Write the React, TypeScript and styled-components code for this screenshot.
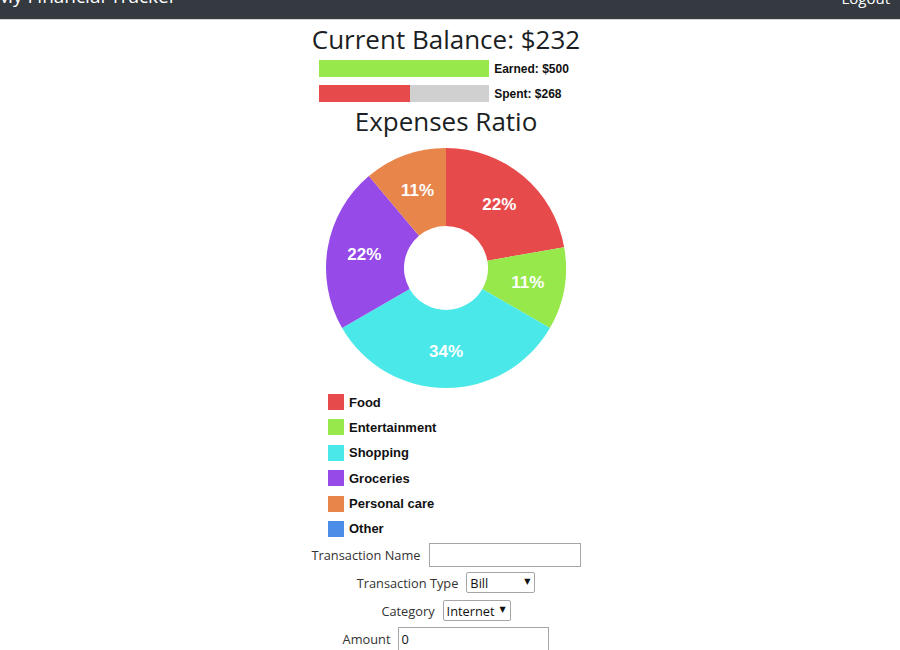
import React from "react";
import styled, { createGlobalStyle } from "styled-components";

const Global = createGlobalStyle`
  html, body { margin: 0; padding: 0; background: #fff; overflow: hidden; }
  body { font-family: "Open Sans", "Noto Sans", sans-serif; color: #212529; }
`;

const Page = styled.div`
  margin-top: -36px; /* page scrolled */
`;

const NavBar = styled.nav`
  height: 56px;
  background: #343a40;
  display: flex;
  align-items: center;
  justify-content: space-between;
  padding: 0 10px 0 0;
  border-bottom: 1px solid #d6d6d6;
  box-sizing: border-box;
`;

const Brand = styled.span`
  color: #fff;
  font-size: 19px;
  line-height: 1;
  padding-top: 10px;
  margin-left: -4px;
`;

const NavLink = styled.span`
  color: #fff;
  font-size: 15px;
  padding-top: 12px;
`;

const Main = styled.main`
  display: flex;
  flex-direction: column;
  align-items: center;
  padding-right: 8px;
`;

const Heading = styled.h1`
  margin: 0;
  font-size: 26px;
  font-weight: 500;
  line-height: 32px;
  color: #1b1f23;
`;

const BalanceHeading = styled(Heading)`
  margin-top: 3px;
`;

const Bars = styled.div`
  display: grid;
  grid-template-columns: 170px auto;
  column-gap: 5px;
  row-gap: 8px;
  margin-top: 5px;
  align-items: center;
  margin-left: -4px;
`;

const Track = styled.div`
  height: 17px;
  background: #d0d0d0;
  display: flex;
`;

const Fill = styled.div<{ $color: string }>`
  height: 100%;
  background: ${(p) => p.$color};
`;

const BarLabel = styled.span`
  font-family: "Liberation Sans", Arial, sans-serif;
  font-weight: bold;
  font-size: 12px;
  color: #111;
`;

const RatioHeading = styled(Heading)`
  margin-top: 3px;
`;

const ChartBox = styled.div`
  width: 242px;
  margin-top: 10px;
  display: flex;
  flex-direction: column;
`;

const Legend = styled.ul`
  list-style: none;
  margin: 5px 0 0 3px;
  padding: 0;
  display: flex;
  flex-direction: column;
  gap: 9.4px;
`;

const LegendItem = styled.li`
  display: flex;
  align-items: center;
  gap: 5px;
  height: 16px;
  font-family: "Liberation Sans", Arial, sans-serif;
  font-weight: bold;
  font-size: 13px;
  color: #111;
`;

const Swatch = styled.span<{ $color: string }>`
  width: 16px;
  height: 16px;
  background: ${(p) => p.$color};
  flex: none;
`;

const Form = styled.form`
  display: flex;
  flex-direction: column;
  align-items: center;
  gap: 6px;
  margin-top: 7px;
`;

const Row = styled.label`
  display: flex;
  align-items: center;
  gap: 8px;
  font-size: 12.8px;
  color: #333;
  height: 22px;
`;

const TextInput = styled.input<{ $w: number }>`
  width: ${(p) => p.$w}px;
  height: 24px;
  box-sizing: border-box;
  border: 1px solid #a6a6a6;
  padding: 0 2px;
  font-family: "Open Sans", sans-serif;
  font-size: 12.8px;
  color: #111;
`;

const SelectWrap = styled.span`
  position: relative;
  display: inline-flex;
`;

const Select = styled.select<{ $w: number }>`
  appearance: none;
  -webkit-appearance: none;
  width: ${(p) => p.$w}px;
  height: 21px;
  box-sizing: border-box;
  border: 1px solid #a6a6a6;
  border-radius: 2px;
  background: #fff;
  font-family: "Open Sans", sans-serif;
  font-size: 12.8px;
  color: #111;
  padding: 0 12px 0 3px;
  outline: none;
`;

const Arrow = styled.span`
  position: absolute;
  right: 5px;
  top: 4px;
  font-size: 8px;
  line-height: 12px;
  color: #111;
  pointer-events: none;
  font-family: "DejaVu Sans", sans-serif;
`;

const colors = ["#e74a4b", "#96e84b", "#4ae8e8", "#964ae8", "#e8854a", "#4a8ee8"];
const names = ["Food", "Entertainment", "Shopping", "Groceries", "Personal care", "Other"];
const slices = [
  { deg: 80, label: "22%" },
  { deg: 40, label: "11%" },
  { deg: 120, label: "34%" },
  { deg: 80, label: "22%" },
  { deg: 40, label: "11%" },
];

const R = 120;
const r = 42;
const C = 121;

function pt(rad: number, deg: number) {
  const a = (deg * Math.PI) / 180;
  return [C + rad * Math.sin(a), C - rad * Math.cos(a)];
}

function Donut() {
  let start = 0;
  return (
    <svg width={242} height={242} viewBox="0 0 242 242">
      {slices.map((s, i) => {
        const end = start + s.deg;
        const large = s.deg > 180 ? 1 : 0;
        const [x1, y1] = pt(R, start);
        const [x2, y2] = pt(R, end);
        const [x3, y3] = pt(r, end);
        const [x4, y4] = pt(r, start);
        const d = `M${x1},${y1} A${R},${R} 0 ${large} 1 ${x2},${y2} L${x3},${y3} A${r},${r} 0 ${large} 0 ${x4},${y4} Z`;
        const [lx, ly] = pt(83, start + s.deg / 2);
        start = end;
        return (
          <g key={i}>
            <path d={d} fill={colors[i]} />
            <text
              x={lx}
              y={ly + 6}
              textAnchor="middle"
              fill="#fff"
              fontFamily="'Liberation Sans', Arial, sans-serif"
              fontWeight="bold"
              fontSize="17"
            >
              {s.label}
            </text>
          </g>
        );
      })}
    </svg>
  );
}

function Dropdown({ w, value, options }: { w: number; value: string; options: string[] }) {
  return (
    <SelectWrap>
      <Select $w={w} defaultValue={value}>
        {options.map((o) => (
          <option key={o}>{o}</option>
        ))}
      </Select>
      <Arrow>▼</Arrow>
    </SelectWrap>
  );
}

export default function App() {
  return (
    <Page>
      <Global />
      <NavBar>
        <Brand>My Financial Tracker</Brand>
        <NavLink>Logout</NavLink>
      </NavBar>
      <Main>
        <BalanceHeading>Current Balance: $232</BalanceHeading>
        <Bars>
          <Track>
            <Fill $color="#96e84b" style={{ width: "100%" }} />
          </Track>
          <BarLabel>Earned: $500</BarLabel>
          <Track>
            <Fill $color="#e74a4b" style={{ width: `${(268 / 500) * 100}%` }} />
          </Track>
          <BarLabel>Spent: $268</BarLabel>
        </Bars>
        <RatioHeading>Expenses Ratio</RatioHeading>
        <ChartBox>
          <Donut />
          <Legend>
            {names.map((n, i) => (
              <LegendItem key={n}>
                <Swatch $color={colors[i]} />
                {n}
              </LegendItem>
            ))}
          </Legend>
        </ChartBox>
        <Form onSubmit={(e) => e.preventDefault()}>
          <Row>
            Transaction Name
            <TextInput $w={152} type="text" />
          </Row>
          <Row>
            Transaction Type
            <Dropdown w={69} value="Bill" options={["Bill", "Income"]} />
          </Row>
          <Row>
            Category
            <Dropdown w={68} value="Internet" options={["Internet", "Food"]} />
          </Row>
          <Row>
            Amount
            <TextInput $w={151} type="text" defaultValue="0" />
          </Row>
        </Form>
      </Main>
    </Page>
  );
}
